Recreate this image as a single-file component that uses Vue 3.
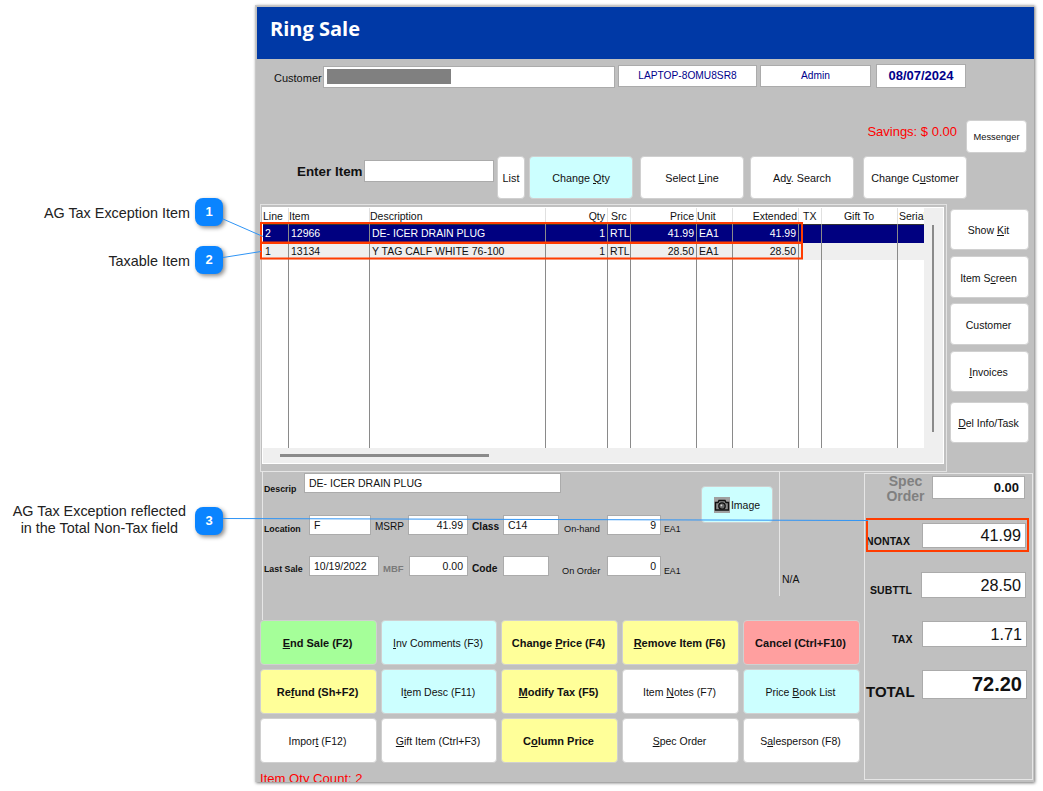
<script setup>
const topBtns = [
  { key: 'list', a: 'List', u: '', b: '', cls: 'tb-list white' },
  { key: 'qty', a: 'Change ', u: 'Q', b: 'ty', cls: 'tb-qty cyan' },
  { key: 'sel', a: 'Select ', u: 'L', b: 'ine', cls: 'tb-sel white' },
  { key: 'adv', a: 'Ad', u: 'v', b: '. Search', cls: 'tb-adv white' },
  { key: 'cust', a: 'Change C', u: 'u', b: 'stomer', cls: 'tb-cust white' }
]
const sideBtns = [
  { a: 'Show ', u: 'K', b: 'it', cls: 'h41' },
  { a: 'Item S', u: 'c', b: 'reen', cls: 'h42 m6' },
  { a: 'Customer', u: '', b: '', cls: 'h42 m5' },
  { a: '', u: 'I', b: 'nvoices', cls: 'h41 m6' },
  { a: '', u: 'D', b: 'el Info/Task', cls: 'h41 m10' }
]
const cols = [
  { h: 'Line', c: 'l' }, { h: 'Item', c: 'l' }, { h: 'Description', c: 'l' },
  { h: 'Qty', c: 'r hq' }, { h: 'Src', c: 'l hs' }, { h: 'Price', c: 'r hq' },
  { h: 'Unit', c: 'l' }, { h: 'Extended', c: 'r' }, { h: 'TX', c: 'l ht' },
  { h: 'Gift To', c: 'm' }, { h: 'Serial', c: 'l hz' }
]
const rows = [
  { id: 'a', cls: 'sel', v: ['2', '12966', 'DE- ICER DRAIN PLUG', '1', 'RTL', '41.99', 'EA1', '41.99', '', '', ''] },
  { id: 'b', cls: 'alt', v: ['1', '13134', 'Y TAG CALF WHITE 76-100', '1', 'RTL', '28.50', 'EA1', '28.50', '', '', ''] }
]
const actions = [
  { a: '', u: 'E', b: 'nd Sale (F2)', cls: 'green bold' },
  { a: '', u: 'I', b: 'nv Comments (F3)', cls: 'cyan' },
  { a: 'Change ', u: 'P', b: 'rice (F4)', cls: 'yellow bold' },
  { a: '', u: 'R', b: 'emove Item (F6)', cls: 'yellow bold' },
  { a: 'Cancel (Ctrl+F10)', u: '', b: '', cls: 'red bold' },
  { a: 'Re', u: 'f', b: 'und (Sh+F2)', cls: 'yellow bold' },
  { a: 'I', u: 't', b: 'em Desc (F11)', cls: 'cyan' },
  { a: '', u: 'M', b: 'odify Tax (F5)', cls: 'yellow bold' },
  { a: 'Item ', u: 'N', b: 'otes (F7)', cls: 'white' },
  { a: 'Price ', u: 'B', b: 'ook List', cls: 'cyan' },
  { a: 'Impor', u: 't', b: ' (F12)', cls: 'white' },
  { a: '', u: 'G', b: 'ift Item (Ctrl+F3)', cls: 'white' },
  { a: 'C', u: 'o', b: 'lumn Price', cls: 'yellow bold' },
  { a: '', u: 'S', b: 'pec Order', cls: 'white' },
  { a: 'S', u: 'a', b: 'lesperson (F8)', cls: 'white' }
]
</script>

<template>
  <div class="page">
    <div class="win">
      <div class="title">Ring Sale</div>

      <div class="row1">
        <span class="custlabel">Customer</span>
        <div class="field custfield"><span class="redact"></span></div>
        <div class="field host">LAPTOP-8OMU8SR8</div>
        <div class="field user">Admin</div>
        <div class="field date">08/07/2024</div>
      </div>

      <div class="row2">
        <span class="savings">Savings: $ 0.00</span>
        <button class="btn msg white">Messenger</button>
      </div>

      <div class="row3">
        <span class="enter">Enter Item</span>
        <div class="field enterfield"></div>
        <button v-for="b in topBtns" :key="b.key" class="btn" :class="b.cls">{{ b.a }}<u v-if="b.u">{{ b.u }}</u>{{ b.b }}</button>
      </div>

      <div class="middle">
        <div class="frame">
          <div class="inner">
            <div class="tablewrap">
              <div class="tbl">
                <div v-for="c in cols" :key="c.h" class="th" :class="c.c">{{ c.h }}</div>
                <template v-for="r in rows" :key="r.id">
                  <div v-for="(v, i) in r.v" :key="i" class="td" :class="[r.cls, cols[i].c]">{{ v }}</div>
                </template>
                <div v-for="c in cols" :key="c.h + 'f'" class="td fill"></div>
              </div>
              <div class="hscroll"><span class="hthumb"></span></div>
            </div>
            <div class="vscroll"><span class="vthumb"></span></div>
          </div>
        </div>
        <div class="side">
          <button v-for="b in sideBtns" :key="b.a + b.b" class="btn white sidebtn" :class="b.cls">{{ b.a }}<u v-if="b.u">{{ b.u }}</u>{{ b.b }}</button>
        </div>
      </div>

      <div class="bottom">
        <div class="leftcol">
          <div class="detail">
            <div class="fields">
              <div class="frow desc">
                <span class="lb strong ldesc">Descrip</span>
                <div class="field fdesc">DE- ICER DRAIN PLUG</div>
              </div>
              <div class="frow r2">
                <span class="lb strong low w46">Location</span>
                <div class="field w62">F</div>
                <span class="lb mid w37">MSRP</span>
                <div class="field num w60">41.99</div>
                <span class="lb strong big mid w35">Class</span>
                <div class="field w56">C14</div>
                <span class="lb tiny low w48 p5">On-hand</span>
                <div class="field num w54">9</div>
                <span class="lb ea low">EA1</span>
              </div>
              <div class="frow r3">
                <span class="lb strong low2 w46">Last Sale</span>
                <div class="field w70">10/19/2022</div>
                <span class="lb low2 w30 faint">MBF</span>
                <div class="field num w59">0.00</div>
                <span class="lb strong big low2 w35">Code</span>
                <div class="field w46f"></div>
                <span class="lb tiny low3 w58 p13">On Order</span>
                <div class="field num w54">0</div>
                <span class="lb ea low3">EA1</span>
              </div>
            </div>
            <div class="imgcol">
              <button class="btn cyan imgbtn">
                <svg class="cam" width="16" height="16" viewBox="0 0 16 16">
                  <rect width="16" height="16" fill="#a0a0a0" />
                  <path d="M1.5 5.5h2.5l1-2h6l1 2h2.5v7.5h-13z" fill="#8c8c8c" stroke="#111" stroke-width="1.4" />
                  <circle cx="8" cy="9" r="3.2" fill="#6a6a6a" stroke="#111" stroke-width="1.3" />
                  <circle cx="7.4" cy="8.4" r="0.9" fill="#d8d8d8" />
                </svg>Image
              </button>
            </div>
            <div class="nacol"><span class="na">N/A</span></div>
          </div>
          <div class="actions">
            <button v-for="b in actions" :key="b.a + b.u + b.b" class="btn" :class="b.cls">{{ b.a }}<u v-if="b.u">{{ b.u }}</u>{{ b.b }}</button>
          </div>
          <div class="qtycount">Item Qty Count: 2</div>
        </div>

        <div class="totals">
          <div class="trow tspec">
            <span class="speclb">Spec<br />Order</span>
            <div class="field tval specval">0.00</div>
          </div>
          <div class="trow tnon">
            <span class="tlb nonlb">NONTAX</span>
            <div class="field tval large nonval">41.99</div>
          </div>
          <div class="trow tsub">
            <span class="tlb sublb">SUBTTL</span>
            <div class="field tval large subval">28.50</div>
          </div>
          <div class="trow ttax">
            <span class="tlb taxlb">TAX</span>
            <div class="field tval large taxval">1.71</div>
          </div>
          <div class="trow ttot">
            <span class="totlb">TOTAL</span>
            <div class="field tval totval">72.20</div>
          </div>
        </div>
      </div>
    </div>

    <div class="callout c1"><span class="ctext">AG Tax Exception Item</span><span class="badge">1</span></div>
    <div class="callout c2"><span class="ctext">Taxable Item</span><span class="badge">2</span></div>
    <div class="callout c3"><span class="ctext two">AG Tax Exception reflected<br />in the Total Non-Tax field</span><span class="badge">3</span></div>

    <svg class="overlay" width="1043" height="791" viewBox="0 0 1043 791">
      <g fill="none" stroke="#ff3c00" stroke-width="2">
        <rect x="261" y="223" width="541" height="19.5" />
        <rect x="261" y="243" width="541" height="15.5" />
        <rect x="867" y="519" width="161" height="32" />
      </g>
      <g fill="none" stroke="#2f94f5" stroke-width="1">
        <path d="M223 219L263 236.5" />
        <path d="M223 257.5L261 251.5" />
        <path d="M223 518.5L868 520.5" />
      </g>
    </svg>
  </div>
</template>

<style>
html, body { margin: 0; background: #fff; }
</style>

<style scoped>
.page {
  box-sizing: border-box;
  position: relative;
  width: 1043px;
  height: 791px;
  padding: 5px 0 0 255px;
  overflow: hidden;
  background: #fff;
  font-family: "Liberation Sans", Arial, sans-serif;
  font-size: 11px;
  color: #111;
}
.win {
  box-sizing: border-box;
  width: 779px;
  height: 777px;
  border-top: 1px solid #c8c8c8;
  border-left: 1px solid #c8c8c8;
  padding: 1px 0 0 1px;
  box-shadow: 1px 1px 3px rgba(0, 0, 0, .55);
  overflow: hidden;
  display: flex;
  flex-direction: column;
  background: #c0c0c0;
}
.title {
  flex: none;
  height: 52px;
  background: #0039a6;
  color: #fff;
  font-family: "Open Sans", sans-serif;
  font-weight: 700;
  font-size: 20px;
  line-height: 43px;
  padding-left: 13px;
}
.field {
  box-sizing: border-box;
  background: #fff;
  border: 1px solid #ababab;
  white-space: nowrap;
  overflow: hidden;
}
.btn {
  box-sizing: border-box;
  margin: 0;
  padding: 0;
  border: 1px solid #d0d0d0;
  border-radius: 4px;
  font: inherit;
  color: #111;
  text-align: center;
  white-space: nowrap;
}
.white { background: #fff; }
.cyan { background: #ccffff; }
.yellow { background: #ffff99; }
.green { background: #a5ff99; }
.red { background: #ff9f9f; }
.bold { font-weight: 700; }

.row1 {
  flex: none;
  display: flex;
  align-items: center;
  height: 24px;
  margin-top: 5px;
}
.custlabel { width: 49px; margin-left: 17px; padding-top: 3px; }
.custfield { width: 292px; height: 22px; padding: 2px 3px; margin-top: 1px; }
.redact { display: block; width: 124px; height: 15px; background: #808080; }
.host, .user { height: 22px; text-align: center; color: #00008b; line-height: 20px; font-size: 10.2px; }
.host { width: 139px; margin-left: 3px; }
.user { width: 111px; margin-left: 3px; }
.date { width: 90px; height: 24px; margin-left: 5px; text-align: center; color: #00008b; font-weight: 700; font-size: 13px; line-height: 22px; }

.row2 {
  flex: none;
  display: flex;
  justify-content: flex-end;
  align-items: flex-start;
  height: 33px;
  margin-top: 32px;
  padding-right: 7px;
}
.savings { font-size: 13px; color: #ff0000; margin: 4px 9px 0 0; }
.msg { width: 61px; height: 33px; font-size: 9.3px; }

.row3 {
  flex: none;
  display: flex;
  height: 43px;
  margin-top: 3px;
  padding-left: 40px;
}
.enter { width: 67px; font-size: 13.4px; font-weight: 700; line-height: 31px; color: #111; }
.enterfield { width: 130px; height: 22px; margin-top: 4px; }
.row3 .btn { height: 43px; width: 104px; font-size: 10.8px; }
.row3 .tb-list { width: 28px; margin-left: 3px; }
.tb-qty { margin-left: 4px; }
.tb-sel { margin-left: 7px; }
.tb-adv { margin-left: 6px; }
.tb-cust { margin-left: 9px; }

.middle {
  flex: none;
  display: flex;
  height: 267px;
  margin-top: 5px;
  padding-left: 3px;
}
.frame {
  box-sizing: border-box;
  flex: none;
  width: 687px;
  height: 268px;
  border: 1px solid #e2e2e2;
  padding: 2px 2px 7px 1px;
}
.inner {
  display: flex;
  height: 100%;
  background: #efefef;
  border: 1px solid #fff;
  box-sizing: border-box;
}
.tablewrap { flex: none; width: 661px; display: flex; flex-direction: column; }
.tbl {
  flex: none;
  height: 240px;
  display: grid;
  grid-template-columns: 26px 81px 176px 62px 23px 66px 36px 66px 23px 76px 26px;
  grid-template-rows: 17px 18px 17px 1fr;
  background: #fff;
}
.th, .td {
  box-sizing: border-box;
  overflow: hidden;
  white-space: nowrap;
  line-height: 16px;
  font-size: 10.5px;
}
.th {
  border-right: 1px solid #e0e0e0;
  border-bottom: 1px solid #333;
  padding: 1px 1px 0 0;
  line-height: 15px;
}
.th.hq { padding-right: 2px; }
.th.hs { padding-left: 3px; }
.th.ht { padding-left: 4px; }
.th.hz { padding-left: 1px; padding-right: 0; }
.td { border-right: 1px solid #8a8a8a; padding: 0 2px; }
.th:nth-child(11), .td:nth-child(11n) { border-right: 0; }
.l { text-align: left; }
.r { text-align: right; }
.m { text-align: center; }
.sel { background: #000080; color: #fff; }
.alt { background: #efefef; }
.hscroll { flex: 1; display: flex; align-items: center; padding-left: 17px; }
.hthumb { width: 209px; height: 3px; background: #8a8a8a; }
.vscroll { flex: 1; padding: 17px 0 0 8px; }
.vthumb { display: block; width: 2px; height: 207px; background: #8a8a8a; }

.side { flex: none; width: 79px; margin-left: 3px; padding-top: 5px; display: flex; flex-direction: column; }
.sidebtn { width: 79px; font-size: 10.5px; padding-right: 2px; }
.h41 { height: 41px; }
.h42 { height: 42px; padding-top: 1px; }
.m5 { margin-top: 5px; }
.m6 { margin-top: 6px; }
.m10 { margin-top: 10px; }

.bottom { flex: 1; display: flex; min-height: 0; }
.leftcol { flex: none; width: 607px; display: flex; flex-direction: column; }
.detail {
  box-sizing: border-box;
  flex: none;
  height: 149px;
  margin-left: 5px;
  border-left: 1px solid #e6e6e6;
  display: flex;
  position: relative;
}
.fields { flex: none; width: 437px; padding-top: 2px; }
.frow { display: flex; align-items: flex-start; }
.desc { height: 21px; }
.r2 { margin-top: 21px; height: 20px; }
.r3 { margin-top: 21px; height: 20px; }
.lb { box-sizing: border-box; white-space: nowrap; font-size: 10px; line-height: 12px; padding-top: 6px; }
.strong { font-weight: 700; font-size: 8.8px; }
.big { font-size: 10.2px; }
.tiny { font-size: 9.2px; }
.ldesc { width: 41px; padding-left: 1px; padding-top: 10px; }
.fdesc { width: 257px; height: 21px; line-height: 20px; padding-left: 4px; font-size: 10.5px; }
.frow .field { height: 20px; line-height: 18px; padding: 0 4px; font-size: 10.5px; }
.num { text-align: right; }
.low { padding-top: 8px; }
.mid { padding-top: 6px; padding-left: 4px; }
.low2 { padding-top: 7px; }
.low3 { padding-top: 9px; }
.w46 { width: 46px; padding-left: 1px; }
.w62 { width: 62px; }
.w37 { width: 37px; }
.w60 { width: 60px; }
.w35 { width: 35px; padding-left: 4px; }
.w56 { width: 56px; }
.w48 { width: 48px; }
.p5 { padding-left: 5px; }
.w54 { width: 54px; }
.ea { padding-left: 3px; font-size: 8.8px; }
.w70 { width: 70px; }
.w30 { width: 30px; padding-left: 4px; }
.faint { color: #7a7a7a; font-weight: 700; font-size: 9.5px; }
.w59 { width: 59px; }
.frow .w46f { width: 46px; }
.w58 { width: 58px; }
.p13 { padding-left: 13px; }
.imgcol { flex: none; width: 79px; padding-top: 15px; }
.imgbtn { width: 72px; height: 37px; display: flex; align-items: center; justify-content: center; gap: 1px; margin-left: 1px; font-size: 10.5px; }
.cam { flex: none; }
.nacol {
  box-sizing: border-box;
  flex: none;
  width: 80px;
  height: 125px;
  border-left: 1px solid #e6e6e6;
  padding: 102px 0 0 2px;
  font-size: 10.5px;
}
.detail::before {
  content: "";
  position: absolute;
  top: 0;
  left: 0;
  width: 517px;
  border-top: 1px solid #e6e6e6;
}
.actions {
  flex: none;
  display: grid;
  grid-template-columns: 117px 116px 117px 117px 117px;
  grid-auto-rows: 45px;
  gap: 4px;
  padding-left: 3px;
}
.actions .btn { font-size: 10.5px; padding: 0 2px 0 0; }
.actions .bold { font-size: 11px; }
.qtycount { flex: none; margin-top: 8px; padding-left: 3px; font-size: 13.1px; line-height: 16px; color: #ff0000; }

.totals {
  box-sizing: border-box;
  flex: none;
  width: 169px;
  height: 307px;
  margin-top: 2px;
  border: 1px solid #e6e6e6;
  padding-top: 2px;
}
.trow { display: flex; align-items: flex-start; }
.tval { text-align: right; padding-right: 4px; }
.large { font-size: 16.2px; }
.tspec { height: 23px; }
.speclb { width: 67px; margin-top: -2px; font-size: 14px; line-height: 15px; font-weight: 700; color: #808080; text-align: center; padding-left: 14px; box-sizing: border-box; height: 23px; }
.specval { width: 93px; height: 23px; font-size: 13px; font-weight: 700; line-height: 21px; padding-right: 5px; }
.tnon { height: 25px; margin-top: 24px; }
.nonlb { width: 57px; }
.nonval { width: 104px; height: 25px; line-height: 23px; }
.tlb { font-size: 10.5px; font-weight: 700; line-height: 12px; padding-top: 12px; letter-spacing: .1px; box-sizing: border-box; padding-left: 1px; }
.tsub { height: 26px; margin-top: 24px; }
.sublb { width: 56px; padding-left: 5px; }
.subval { width: 105px; height: 26px; line-height: 25px; }
.ttax { height: 26px; margin-top: 23px; }
.taxlb { width: 57px; padding-left: 27px; }
.taxval { width: 105px; height: 26px; line-height: 25px; }
.ttot { height: 29px; margin-top: 23px; }
.totlb { width: 57px; font-size: 15px; font-weight: 700; line-height: 18px; padding-top: 13px; padding-left: 1px; box-sizing: border-box; }
.totval { width: 105px; height: 29px; font-size: 20px; font-weight: 700; line-height: 26px; }

.callout {
  position: absolute;
  left: 0;
  width: 223px;
  display: flex;
  justify-content: flex-end;
  align-items: center;
  gap: 5px;
}
.c1 { top: 198px; }
.c2 { top: 246px; }
.c3 { top: 504px; gap: 9px; }
.ctext { font-size: 14.4px; color: #222; white-space: nowrap; margin-top: 2px; }
.two { text-align: center; line-height: 17px; margin-top: -1px; }
.badge {
  flex: none;
  width: 28px;
  height: 28px;
  border-radius: 8px;
  background: #0a84ff;
  color: #fff;
  font-weight: 700;
  font-size: 13px;
  line-height: 28px;
  text-align: center;
  box-shadow: 2px 2px 4px rgba(0, 0, 0, .45);
}
.overlay { position: absolute; top: 0; left: 0; pointer-events: none; }
</style>
